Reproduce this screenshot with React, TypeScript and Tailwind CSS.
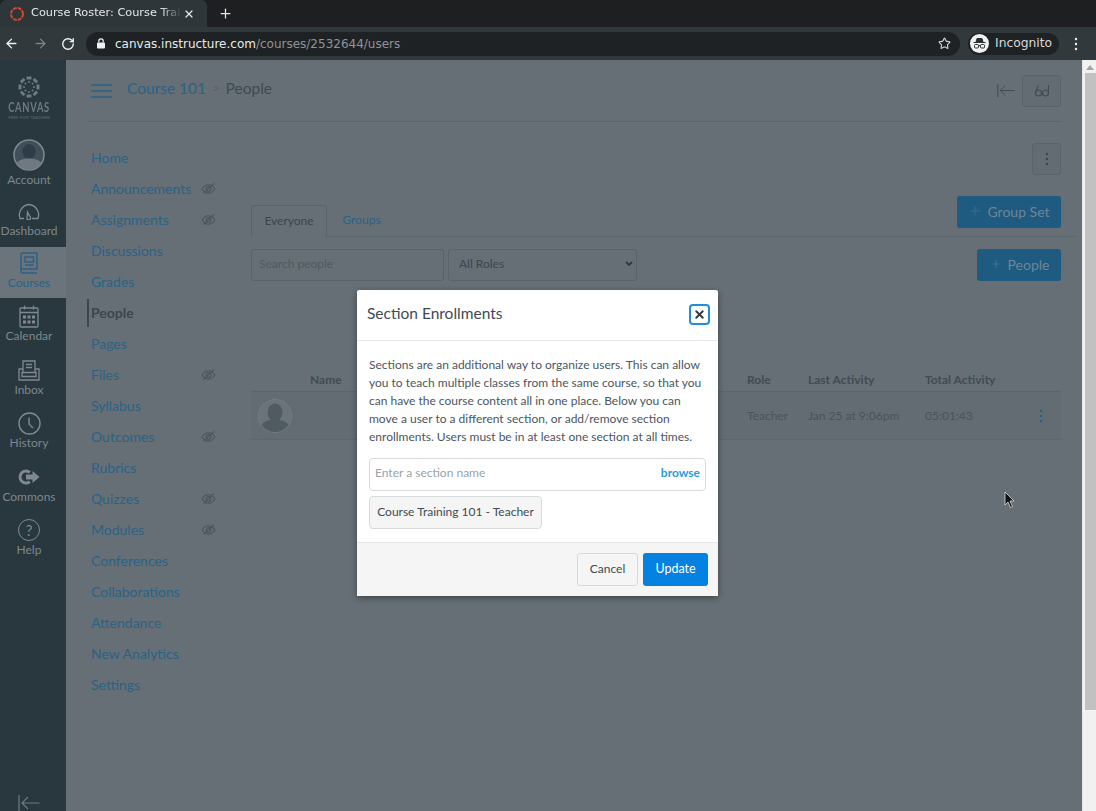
import { ArrowLeft, ArrowRight, Plus, RotateCw, Star, X } from "lucide-react";

const courseLinks = [
  { label: "Home" },
  { label: "Announcements", hidden: true },
  { label: "Assignments", hidden: true },
  { label: "Discussions" },
  { label: "Grades" },
  { label: "People", active: true },
  { label: "Pages" },
  { label: "Files", hidden: true },
  { label: "Syllabus" },
  { label: "Outcomes", hidden: true },
  { label: "Rubrics" },
  { label: "Quizzes", hidden: true },
  { label: "Modules", hidden: true },
  { label: "Conferences" },
  { label: "Collaborations" },
  { label: "Attendance" },
  { label: "New Analytics" },
  { label: "Settings" },
];

function EyeOff() {
  return (
    <svg width="15" height="13" viewBox="0 0 16 14" fill="none" stroke="#4b555b" strokeWidth="1.2">
      <path d="M1 7.5C3 4.5 5.5 3 8 3s5 1.5 7 4.5c-2 3-4.5 4.5-7 4.5S3 10.5 1 7.5z" />
      <circle cx="8" cy="7.5" r="2.5" />
      <path d="M2.5 12.500L14 1.5" />
    </svg>
  );
}

function AccountIcon() {
  return (
    <svg className="shrink-0" width="32" height="32" viewBox="0 0 32 32">
      <circle cx="16" cy="16" r="15" fill="#3f505b" stroke="#7f898f" strokeWidth="1.5" />
      <ellipse cx="16" cy="12.5" rx="6.500" ry="7.500" fill="#2d3c46" />
      <path d="M3.500 24c3-3.500 7.500-4.500 12.500-4.500s9.500 1 12.500 4.500a15 15 0 0 1-25 0z" fill="#6f7a80" />
    </svg>
  );
}

function DashboardIcon() {
  return (
    <svg width="24" height="17" viewBox="0 0 24 17" fill="none" stroke="#7f898f" strokeWidth="1.3">
      <path d="M7 15.500H3A10.500 10.500 0 0 1 12 1.500 10.500 10.500 0 0 1 21 15.500H15" />
      <path d="M10 15.500L10.500 9l3 5.500a1.800 1.800 0 0 1-3.500 1z" />
    </svg>
  );
}

function CoursesIcon() {
  return (
    <svg width="18" height="22" viewBox="0 0 18 22" fill="none" stroke="#2b6287" strokeWidth="1.5">
      <path d="M1 18V3a2 2 0 0 1 2-2h14v16H3a2 2 0 0 0-2 2 2 2 0 0 0 2 2h14" />
      <rect x="5" y="5" width="8.500" height="5" />
      <path d="M5 13h8.500" />
    </svg>
  );
}

function CalendarIcon() {
  return (
    <svg width="20" height="23" viewBox="0 0 20 23" fill="none" stroke="#7f898f" strokeWidth="1.3">
      <rect x="1" y="3" width="18" height="19" rx="1" />
      <path d="M1 7.500h18M5.500 0.500v4M14.500 0.500v4" />
      <path d="M4 10.500h3v3H4zM8.500 10.500h3v3h-3zM13 10.500h3v3h-3zM4 15.500h3v3H4zM8.500 15.500h3v3h-3zM13 15.500h3v3h-3z" fill="#7f898f" stroke="none" />
    </svg>
  );
}

function InboxIcon() {
  return (
    <svg width="22" height="21" viewBox="0 0 22 21" fill="none" stroke="#7f898f" strokeWidth="1.3">
      <path d="M5 12V1h12v11" />
      <path d="M8 4.500h6M8 7.500h6" />
      <path d="M5 9H1v11h20V9h-4M4 12.500h14v4H4z" />
    </svg>
  );
}

function HistoryIcon() {
  return (
    <svg width="23" height="23" viewBox="0 0 23 23" fill="none" stroke="#7f898f" strokeWidth="1.4">
      <circle cx="11.500" cy="11.500" r="10.500" />
      <path d="M11 5.500V12l4 4" />
    </svg>
  );
}

function CommonsIcon() {
  return (
    <svg width="22" height="16" viewBox="0 0 22 16" fill="#7f898f">
      <path d="M8 .5a7.500 7.500 0 0 0 0 15c2 0 3.500-.7 4.800-1.800l-2-2.200c-.8.700-1.700 1-2.800 1a4.500 4.500 0 0 1 0-9c1.100 0 2 .4 2.800 1l2-2.200A7.400 7.400 0 0 0 8 .5z" />
      <path d="M14.500 2l7 6-7 6v-3.500H8v-5h6.500z" />
    </svg>
  );
}

function HelpIcon() {
  return (
    <div className="flex h-[22px] w-[22px] items-center justify-center rounded-full border-[1.5px] border-[#7f898f] text-[15px] leading-none text-[#7f898f]">
      ?
    </div>
  );
}

function CanvasLogo() {
  const dashes = [0, 45, 90, 135, 180, 225, 270, 315];
  return (
    <svg width="22" height="22" viewBox="0 0 22 22">
      {dashes.map((deg) => (
        <g key={deg} transform={`rotate(${deg} 11 11)`}>
          <rect x="8.500" y="0.500" width="5" height="3" rx="0.500" fill="#6f7a80" />
          <circle cx="11" cy="6" r="1" fill="#6f7a80" />
        </g>
      ))}
    </svg>
  );
}

function Favicon() {
  return (
    <svg width="14" height="14" viewBox="0 0 14 14" fill="none" stroke="#d8492b" strokeWidth="2">
      <circle cx="7" cy="7" r="6" strokeDasharray="3.700 1" />
    </svg>
  );
}

function IncognitoIcon() {
  return (
    <div className="flex h-[19px] w-[19px] items-center justify-center rounded-full bg-[#f1f1f1]">
      <svg width="13" height="11" viewBox="0 0 13 11" fill="none" stroke="#2b2f31" strokeWidth="1">
        <path d="M3 4L4 .5h5L10 4z" fill="#2b2f31" />
        <path d="M.5 4.500h12" />
        <rect x="1.500" y="6.500" width="4" height="3.500" rx="1" />
        <rect x="7.500" y="6.500" width="4" height="3.500" rx="1" />
        <path d="M5.500 7.500h2" />
      </svg>
    </div>
  );
}

function CollapseIcon({ color, width }: { color: string; width: number }) {
  return (
    <svg width={width} height={(width * 16) / 22} viewBox="0 0 22 16" fill="none" stroke={color} strokeWidth="1.2">
      <path d="M1 0v16M21.500 8H4M10 2L4 8l6 6" />
    </svg>
  );
}

function Kebab({ color }: { color: string }) {
  return (
    <svg width="4" height="14" viewBox="0 0 4 14" fill={color}>
      <circle cx="2" cy="2" r="1.2" />
      <circle cx="2" cy="7" r="1.2" />
      <circle cx="2" cy="12" r="1.2" />
    </svg>
  );
}

function NavItem({ icon, label, className, active }: { icon: React.ReactNode; label: string; className: string; active?: boolean }) {
  return (
    <div className={`flex flex-col items-center justify-end pr-[8px] ${className} ${active ? "bg-[#6a747a]" : ""}`}>
      <div className="flex h-[24px] items-center justify-center">{icon}</div>
      <span className={`mt-[1px] text-[12px] leading-[14px] ${active ? "text-[#2b6287]" : "text-[#7d878e]"}`}>{label}</span>
    </div>
  );
}

function Sidebar() {
  return (
    <div className="relative flex w-[66px] shrink-0 flex-col overflow-hidden bg-[#29373f]">
      <div className="flex h-[68px] flex-col items-center pr-[8px] pt-[16px]">
        <CanvasLogo />
        <span className="mt-[3px] scale-x-[0.72] text-[13px] font-bold leading-[13px] tracking-[1px] text-[#6f7a80]">CANVAS</span>
        <span className="whitespace-nowrap text-[4.5px] leading-[7px] text-[#5f6a70]">FREE FOR TEACHER</span>
      </div>
      <div className="flex h-[64px] shrink-0 flex-col items-center pr-[8px] pt-[11px]">
        <AccountIcon />
        <span className="mt-[2px] text-[12px] leading-[14px] text-[#7d878e]">Account</span>
      </div>
      <div>
        <NavItem className="h-[55px] pb-[9px]" icon={<DashboardIcon />} label="Dashboard" />
        <NavItem className="h-[51px] pb-[8px]" icon={<CoursesIcon />} label="Courses" active />
        <NavItem className="h-[53px] pb-[8px]" icon={<CalendarIcon />} label="Calendar" />
        <NavItem className="h-[54px] pb-[8px]" icon={<InboxIcon />} label="Inbox" />
        <NavItem className="h-[53px] pb-[8px]" icon={<HistoryIcon />} label="History" />
        <NavItem className="h-[54px] pb-[8px]" icon={<CommonsIcon />} label="Commons" />
        <NavItem className="h-[53px] pb-[8px]" icon={<HelpIcon />} label="Help" />
      </div>
      <div className="absolute bottom-0 left-[18px] h-[16px]">
        <CollapseIcon color="#6f7a80" width={22} />
      </div>
    </div>
  );
}

function CourseNav() {
  return (
    <div className="ml-[21px] w-[164px] shrink-0 pt-[20px]">
      {courseLinks.map((l) => (
        <div key={l.label} className="relative flex h-[31px] items-center justify-between pl-[4px] pr-[35px]">
          {l.active && <div className="absolute left-0 top-[2px] h-[28px] w-[2px] bg-[#3c464c]" />}
          <span className={`text-[14px] ${l.active ? "font-bold text-[#3c464c]" : "text-[#2b6287]"}`}>{l.label}</span>
          {l.hidden && <EyeOff />}
        </div>
      ))}
    </div>
  );
}

function RosterPane() {
  return (
    <div className="flex-1 pr-[21px]">
      <div className="flex justify-end pt-[21px]">
        <div className="flex h-[32px] w-[29px] items-center justify-center rounded-[3px] border border-[#59636a] bg-[#636c72]">
          <Kebab color="#3c464c" />
        </div>
      </div>
      <div className="-mr-[14px] mt-[22px] flex h-[40px] items-end justify-between border-b border-[#58656d]">
        <div className="flex text-[12px]">
          <div className="-mb-px flex h-[32px] w-[76px] items-center justify-center rounded-t-[3px] border border-b-0 border-[#58656d] bg-[#666f75] pb-[2px] text-[#3c464c]">
            Everyone
          </div>
          <div className="flex h-[31px] w-[69px] items-center justify-center pb-[2px] text-[#2b6287]">Groups</div>
        </div>
        <div className="mb-[8px] mr-[14px] flex h-[32px] w-[104px] items-center justify-center gap-[5px] rounded-[3px] bg-[#1f5a80] pb-[2px] text-[14px] text-[#6d8697]">
          <Plus size={14} strokeWidth={1.2} color="#3d7a9e" />
          Group Set
        </div>
      </div>
      <div className="mt-[12px] flex items-start">
        <div className="flex h-[32px] w-[193px] items-center rounded-[3px] border border-[#59636a] pb-[2px] pl-[7px] text-[12px] text-[#4f5a61]">
          Search people
        </div>
        <div className="ml-[4px] flex h-[32px] w-[189px] items-center justify-between rounded-[3px] border border-[#59636a] pb-[2px] pl-[10px] pr-[3px] text-[12px] text-[#3c464c]">
          All Roles
          <svg width="8" height="6" viewBox="0 0 8 6" fill="none" stroke="#2f393f" strokeWidth="1.8">
            <path d="M1 1l3 3 3-3" />
          </svg>
        </div>
        <div className="ml-auto flex h-[32px] w-[84px] items-center justify-center gap-[5px] rounded-[3px] bg-[#1f5a80] pb-[2px] text-[14px] text-[#6d8697]">
          <Plus size={14} strokeWidth={1.2} color="#3d7a9e" />
          People
        </div>
      </div>
      <div className="mt-[92px] grid h-[19px] grid-cols-[496px_61px_117px_114px_1fr] border-b border-[#58656d] text-[12px] font-bold leading-[14px] text-[#414b52]">
        <span className="pl-[59px]">Name</span>
        <span>Role</span>
        <span>Last Activity</span>
        <span>Total Activity</span>
      </div>
      <div className="grid h-[48px] grid-cols-[496px_61px_117px_114px_1fr] items-center border-b border-[#5d676e] bg-[#636c72] text-[12px] text-[#49535a]">
        <svg className="ml-[7px]" width="34" height="34" viewBox="0 0 34 34">
          <circle cx="17" cy="17" r="16.500" fill="#6a7379" stroke="#737c82" />
          <ellipse cx="17" cy="13.5" rx="7.500" ry="9" fill="#4f5a61" />
          <path d="M3.500 26c3-4 8-5.500 13.500-5.500S27.500 22 30.500 26a16.500 16.500 0 0 1-27 0z" fill="#4f5a61" />
        </svg>
        <span>Teacher</span>
        <span className="whitespace-nowrap">Jan 25 at 9:06pm</span>
        <span>05:01:43</span>
        <Kebab color="#2b6287" />
      </div>
    </div>
  );
}

function Dialog() {
  return (
    <div className="absolute left-[357px] top-[230px] flex h-[306px] w-[361px] flex-col rounded-[2px] bg-white shadow-[0_2px_6px_rgba(0,0,0,0.4)]">
      <div className="flex h-[51px] shrink-0 items-center justify-between border-b border-[#e4e6e8] pl-[10px] pr-[8px]">
        <h2 className="mb-[5px] text-[15.5px] leading-[20px] text-[#3f4a52]">Section Enrollments</h2>
        <div className="mt-[-1px] flex h-[21px] w-[21px] items-center justify-center rounded-[4px] border-2 border-[#1f8fdb]">
          <X size={13} strokeWidth={3.5} color="#2d3b45" />
        </div>
      </div>
      <div className="flex-1 px-[12px] pt-[15px]">
        <p className="w-[340px] text-[12px] leading-[18px] text-[#4b565e]">
          Sections are an additional way to organize users. This can allow you to teach multiple classes from the same course, so that you can have the course content all in one place. Below you can move a user to a different section, or add/remove section enrollments. Users must be in at least one section at all times.
        </p>
        <div className="mt-[12px] flex h-[33px] w-[337px] items-center justify-between rounded-[4px] border border-[#d7dadc] pb-[4px] pl-[5px] pr-[5px] text-[12px]">
          <span className="text-[#9aa3a9]">Enter a section name</span>
          <span className="font-bold text-[#2b9ad6]">browse</span>
        </div>
        <div className="mt-[5px] flex h-[33px] w-[173px] items-center justify-center rounded-[4px] border border-[#d7dadc] bg-[#f5f5f5] pb-[2px] text-[12px] text-[#3f4a52]">
          Course Training 101 - Teacher
        </div>
      </div>
      <div className="flex h-[54px] shrink-0 items-center justify-end gap-[5px] border-t border-[#e4e6e8] bg-[#f5f5f5] pr-[10px] text-[12px]">
        <div className="flex h-[33px] w-[61px] items-center justify-center rounded-[3px] border border-[#d7dadc] bg-[#f5f5f5] pb-[2px] text-[#3f4a52]">Cancel</div>
        <div className="flex h-[33px] w-[65px] items-center justify-center rounded-[3px] bg-[#0581e2] text-[12.5px] text-white">Update</div>
      </div>
    </div>
  );
}

function Scrollbar() {
  return (
    <div className="flex w-[14px] shrink-0 flex-col items-center border-l border-[#e8e8e8] bg-[#f1f1f1]">
      <div className="mt-[5px] h-0 w-0 border-x-[4px] border-b-[5px] border-x-transparent border-b-[#a3a3a3]" />
      <div className="ml-[1px] mt-[3px] h-[637px] w-[11px] bg-[#c1c1c1]" />
    </div>
  );
}

function BrowserChrome() {
  return (
    <div className="shrink-0 font-['DejaVu_Sans',sans-serif]">
      <div className="flex h-[27px] bg-[#1e1f20]">
        <div className="flex w-[207px] items-center rounded-t-[6px] bg-[#2f363a] pl-[10px] text-[11.3px] text-[#e4e6e7]">
          <Favicon />
          <span className="ml-[7px] w-[151px] overflow-hidden whitespace-nowrap [mask-image:linear-gradient(to_right,black_130px,transparent_151px)]">
            Course Roster: Course Training 101
          </span>
          <X size={12} strokeWidth={2.5} color="#e4e6e7" className="ml-[1px]" />
        </div>
        <div className="ml-[11px] flex items-center">
          <Plus size={15} strokeWidth={2} color="#e4e6e7" />
        </div>
      </div>
      <div className="flex h-[33px] items-center bg-[#32393d]">
        <ArrowLeft size={15} strokeWidth={2.2} color="#f1f1f1" className="ml-[4px]" />
        <ArrowRight size={15} strokeWidth={2.2} color="#7c8184" className="ml-[14px]" />
        <RotateCw size={14} strokeWidth={2.4} color="#f1f1f1" className="ml-[13px]" />
        <div className="ml-[11px] flex h-[24px] w-[874px] items-center rounded-full bg-[#1f2224] pl-[10px] text-[12px]">
          <svg width="10" height="11" viewBox="0 0 10 11" fill="none">
            <rect x="1" y="4.500" width="8" height="6" rx="1" fill="#f1f1f1" />
            <path d="M2.800 4.500V3a2.200 2.200 0 0 1 4.400 0v1.500" stroke="#f1f1f1" strokeWidth="1.2" />
          </svg>
          <span className="ml-[9px] text-[#e8eaeb]">canvas.instructure.com</span>
          <span className="text-[#8f9497]">/courses/2532644/users</span>
          <Star size={13} strokeWidth={2} color="#d8dadb" className="ml-auto mr-[9px]" />
        </div>
        <div className="ml-[8px] flex h-[22px] w-[91px] items-center rounded-full bg-[#1f2224] pl-[2px] text-[12.3px] text-[#d8dadb]">
          <IncognitoIcon />
          <span className="ml-[6px]">Incognito</span>
        </div>
        <div className="ml-[15px]">
          <Kebab color="#f1f1f1" />
        </div>
      </div>
    </div>
  );
}

export default function App() {
  return (
    <div className="flex h-screen flex-col overflow-hidden font-['Lato',sans-serif]">
      <BrowserChrome />
      <div className="relative flex min-h-0 flex-1 bg-[#666f75]">
        <Sidebar />
        <div className="flex min-w-0 flex-1 flex-col">
          <div className="ml-[21px] mr-[21px] flex h-[62px] shrink-0 items-center border-b border-[#5b666d] pl-[4px]">
            <svg width="21" height="14" viewBox="0 0 21 14" stroke="#2b6287" strokeWidth="1.5">
              <path d="M0 1h21M0 7h21M0 13h21" />
            </svg>
            <span className="mb-[3px] ml-[15px] text-[15.5px] text-[#2b6287]">Course 101</span>
            <span className="mx-[6px] mb-[3px] text-[13px] text-[#56626a]">&gt;</span>
            <span className="mb-[3px] text-[15.5px] text-[#3f4a52]">People</span>
            <div className="ml-auto flex items-center gap-[7px]">
              <CollapseIcon color="#3f4a52" width={18} />
              <div className="flex h-[32px] w-[39px] items-center justify-center rounded-[3px] border border-[#59636a] bg-[#636c72]">
                <svg width="14" height="13" viewBox="0 0 14 13" fill="none" stroke="#3f4a52" strokeWidth="1.1">
                  <circle cx="3.5" cy="9" r="3" />
                  <circle cx="10.5" cy="9" r="3" />
                  <path d="M6.500 8.500c.3-.5.700-.5 1 0M1 8L3 1.500M13.500 8.500V1" />
                </svg>
              </div>
            </div>
          </div>
          <div className="flex min-h-0 flex-1">
            <CourseNav />
            <RosterPane />
          </div>
        </div>
        <Scrollbar />
        <Dialog />
        <svg className="absolute left-[1004px] top-[431px]" width="11" height="18" viewBox="0 0 11 18">
          <path d="M1 1v13l3-3 2.500 5.500 2-1L6 10h4z" fill="#111" stroke="#ddd" strokeWidth="0.8" />
        </svg>
      </div>
    </div>
  );
}
